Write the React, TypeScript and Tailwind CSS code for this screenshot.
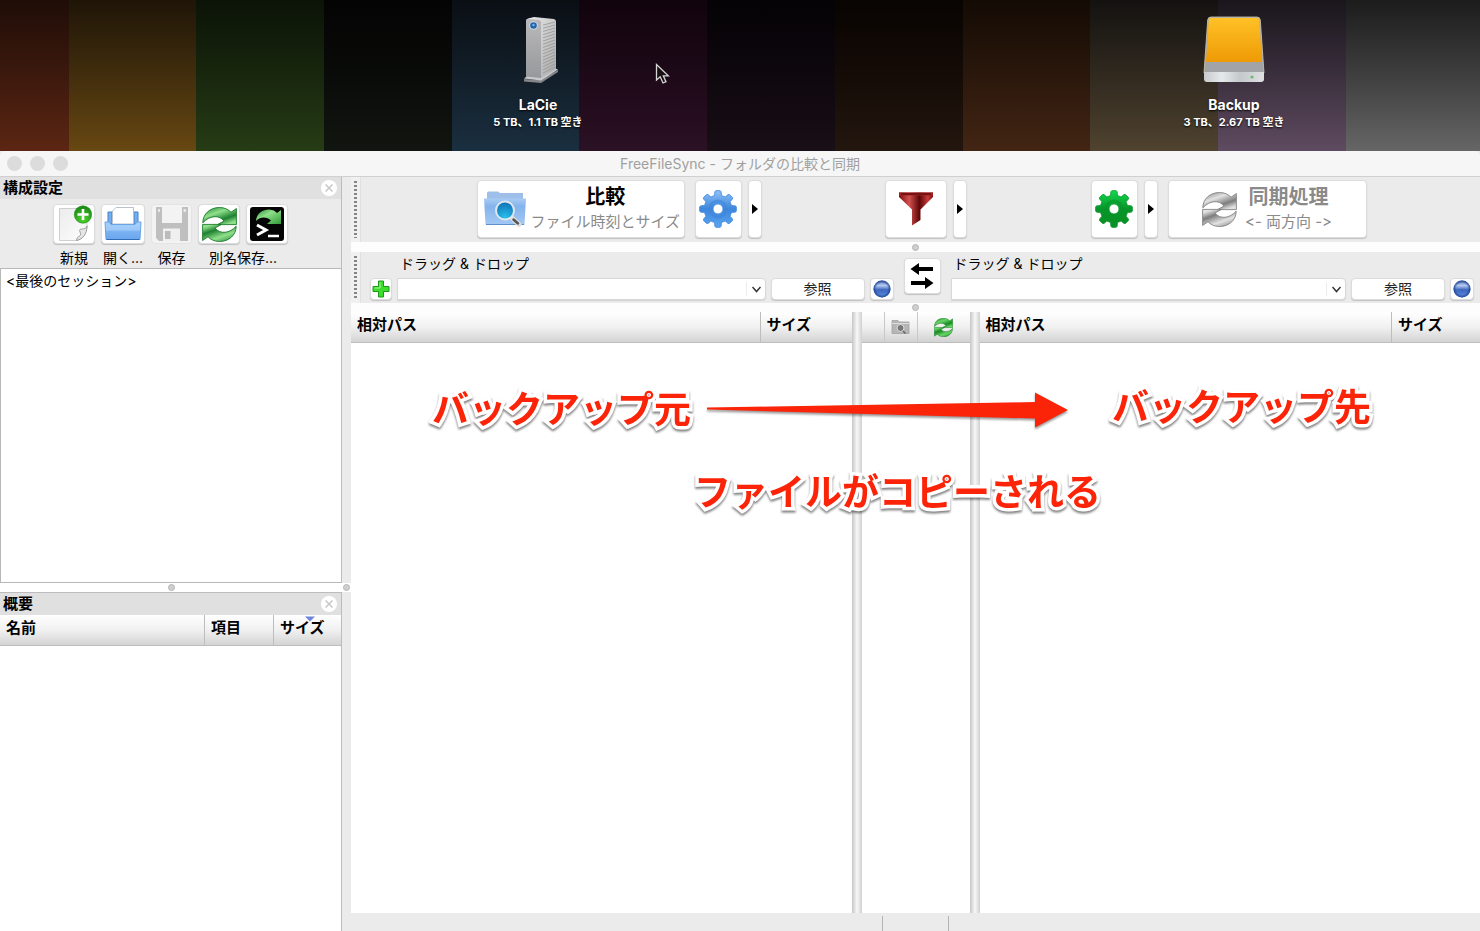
import React from "react";

const stripes = [
  { grow: 69, fill: "bg-linear-to-b from-[#1f0d07] to-[#5c2613]" },
  { grow: 127, fill: "bg-linear-to-b from-[#1f1507] to-[#684812]" },
  { grow: 128, fill: "bg-linear-to-b from-[#0b1307] to-[#263c15]" },
  { grow: 128, fill: "bg-linear-to-b from-[#040404] to-[#11150f]" },
  { grow: 127, fill: "bg-linear-to-b from-[#0a0f14] to-[#1a2f40]" },
  { grow: 128, fill: "bg-linear-to-b from-[#11040d] to-[#2b1124]" },
  { grow: 128, fill: "bg-linear-to-b from-[#050306] to-[#190f16]" },
  { grow: 128, fill: "bg-linear-to-b from-[#080402] to-[#23160f]" },
  { grow: 127, fill: "bg-linear-to-b from-[#140b05] to-[#432514]" },
  { grow: 128, fill: "bg-linear-to-b from-[#141210] to-[#50432f]" },
  { grow: 128, fill: "bg-linear-to-b from-[#1a161c] to-[#5f4b61]" },
  { grow: 134, fill: "bg-linear-to-b from-[#1c1c1c] to-[#666666]" },
];

const raised = "rounded-[4px] border border-[#dcdcdc] bg-white shadow-[0_1px_1px_rgba(0,0,0,0.18)]";
const headerFill = "bg-linear-to-b from-white via-[#f0f0f0] to-[#d2d2d2]";
const headerCell = "border-b border-[#bdbdbd] pb-1 pl-[6px] leading-[20px] font-bold";

function gearPath(cx: number, cy: number, outer: number, inner: number, hole: number) {
  const pts: string[] = [];
  for (let i = 0; i < 8; i++) {
    const a = (i * Math.PI) / 4 - Math.PI / 2;
    const at = (r: number, d: number) =>
      `${(cx + r * Math.cos(a + d)).toFixed(2)},${(cy + r * Math.sin(a + d)).toFixed(2)}`;
    pts.push(at(inner, -0.25), at(outer - 1, -0.18), at(outer, -0.12), at(outer, 0.12), at(outer - 1, 0.18), at(inner, 0.25));
  }
  return `M${pts.join("L")}Z M${cx - hole},${cy} a${hole},${hole} 0 1,0 ${hole * 2},0 a${hole},${hole} 0 1,0 ${-hole * 2},0Z`;
}

function Gear({ id, top, mid, low }: { id: string; top: string; mid: string; low: string }) {
  return (
    <svg width="38" height="38" viewBox="0 0 38 38" aria-hidden="true">
      <defs>
        <linearGradient id={id} x1="0" y1="0" x2="0" y2="1">
          <stop offset="0" stopColor={top} />
          <stop offset="0.5" stopColor={mid} />
          <stop offset="1" stopColor={low} />
        </linearGradient>
      </defs>
      <path d={gearPath(19, 19, 18.5, 14, 5)} fillRule="evenodd" fill={`url(#${id})`} stroke={mid} strokeWidth="0.8" />
      <circle cx="19" cy="19" r="8" fill="none" stroke={mid} strokeOpacity="0.6" strokeWidth="3" />
    </svg>
  );
}

function SyncArrows({ id, size, light, dark, edge }: { id: string; size: number; light: string; dark: string; edge: string }) {
  const d = "M0.8 15.8C0.800 7 8 0.500 17.500 0.500C22.500 0.500 26.500 2.500 29 5.200L34.400 1.500V17.600H15.500L22 14C17 7.500 7.500 8.500 0.800 15.800Z";
  return (
    <svg width={size} height={size} viewBox="0 0 35 35" aria-hidden="true">
      <defs>
        <linearGradient id={id} x1="0" y1="0" x2="0.7" y2="1">
          <stop offset="0" stopColor={dark} />
          <stop offset="0.4" stopColor={light} />
          <stop offset="0.75" stopColor={dark} />
          <stop offset="1" stopColor={light} />
        </linearGradient>
      </defs>
      <path d={d} fill={`url(#${id})`} stroke={edge} strokeWidth="0.9" />
      <path d={d} transform="rotate(180 17.5 17.5)" fill={`url(#${id})`} stroke={edge} strokeWidth="0.9" />
    </svg>
  );
}

function NewIcon() {
  return (
    <svg width="36" height="38" viewBox="0 0 36 38" aria-hidden="true">
      <defs>
        <linearGradient id="page" x1="0" y1="0" x2="1" y2="1">
          <stop offset="0" stopColor="#ececec" />
          <stop offset="1" stopColor="#fdfdfd" />
        </linearGradient>
        <radialGradient id="plusBall" cx="0.5" cy="0.8" r="0.8">
          <stop offset="0" stopColor="#4fd52c" />
          <stop offset="1" stopColor="#168414" />
        </radialGradient>
      </defs>
      <path d="M3.500 3.500H31V22C30 29 27 34 21 35.500H3.500Z" fill="url(#page)" stroke="#cfcfcf" />
      <path d="M31 21C30 24.500 26 23.500 24 24.500C22.500 26 25.500 28 24.500 30C23.500 32 21 31 20.500 35.500C27 34 31 29 31 21Z" fill="#e6e6e6" stroke="#8d8d8d" strokeWidth="0.8" />
      <circle cx="27" cy="9.500" r="8.700" fill="url(#plusBall)" stroke="#1c8a18" strokeWidth="0.6" />
      <path d="M27 4V15M21.500 9.500H32.500" stroke="#fff" strokeWidth="2.600" />
    </svg>
  );
}

function OpenIcon() {
  return (
    <svg width="38" height="36" viewBox="0 0 38 36" aria-hidden="true">
      <defs>
        <linearGradient id="tray" x1="0" y1="0" x2="0" y2="1">
          <stop offset="0" stopColor="#a9d0fb" />
          <stop offset="0.45" stopColor="#9cc8f8" />
          <stop offset="0.55" stopColor="#7ab2f2" />
          <stop offset="1" stopColor="#6aa6ec" />
        </linearGradient>
      </defs>
      <path d="M4 6H8V18H4ZM30 6H34V18H30Z" fill="#75aeee" stroke="#4183cc" />
      <path d="M8.500 18V5L12 1.500H29.500V18Z" fill="#fff" stroke="#b9c2cc" />
      <path d="M1 16H5L7 18.500H31L33 16H37L36 33.500H2Z" fill="url(#tray)" stroke="#6aa5e6" />
      <path d="M2.500 33.500H35.500" stroke="#2f6cb8" />
    </svg>
  );
}

function SaveIcon() {
  return (
    <svg width="34" height="36" viewBox="0 0 34 36" aria-hidden="true">
      <path d="M1 1H33V35H4L1 32Z" fill="#bfbfbf" />
      <path d="M7 0.500H27V17H7Z" fill="#f3f3f3" />
      <path d="M28.500 3H31V6H28.500ZM3 3H5V6H3Z" fill="#e8e8e8" />
      <path d="M8 22.500H25V35H8Z" fill="#f0f0f0" />
      <path d="M10 25H15.500V33H10Z" fill="#bcbcbc" />
    </svg>
  );
}

function BatchIcon() {
  return (
    <svg width="36" height="36" viewBox="0 0 36 36" aria-hidden="true">
      <defs>
        <linearGradient id="batchArrow" x1="0" y1="0" x2="1" y2="1">
          <stop offset="0" stopColor="#2c8a3a" />
          <stop offset="0.4" stopColor="#8fe08b" />
          <stop offset="1" stopColor="#2f9a36" />
        </linearGradient>
      </defs>
      <rect x="1" y="1" width="34" height="34" rx="3" fill="#050505" />
      <path d="M7 15C7.500 7 14 3.500 20 3.500C24 3.800 26 5 28 7L32 4V18H18L22 14.500C18 10.500 11 10.500 7 15Z" fill="url(#batchArrow)" />
      <path d="M8 19L17 24L8 29" fill="none" stroke="#fff" strokeWidth="3" />
      <path d="M19 30H30" stroke="#fff" strokeWidth="2.500" />
    </svg>
  );
}

function CompareIcon() {
  return (
    <svg width="44" height="38" viewBox="0 0 44 38" aria-hidden="true">
      <defs>
        <linearGradient id="folder" x1="0" y1="0" x2="0" y2="1">
          <stop offset="0" stopColor="#a9cbf3" />
          <stop offset="0.3" stopColor="#84b4ec" />
          <stop offset="1" stopColor="#a3c8f4" />
        </linearGradient>
        <radialGradient id="lens" cx="0.5" cy="0.9" r="0.9">
          <stop offset="0" stopColor="#25c3ee" />
          <stop offset="1" stopColor="#126cb4" />
        </radialGradient>
      </defs>
      <path d="M4 10V3Q4 1.500 5.500 1.500H15L17 3H40V10Z" fill="#9dbfe9" />
      <path d="M1 8.500H43L41.500 34Q41.500 35 40 35H4Q2.500 35 2.500 34Z" fill="url(#folder)" />
      <path d="M3 34.500H41" stroke="#5f8fca" />
      <path d="M28 27L36 34.500" stroke="#dedede" strokeWidth="5" strokeLinecap="round" />
      <path d="M30.500 29.500L35 33.500" stroke="#555" strokeWidth="2.500" strokeLinecap="round" />
      <circle cx="22" cy="20.500" r="9" fill="url(#lens)" stroke="#dfe7ee" strokeWidth="2" />
    </svg>
  );
}

function FunnelIcon() {
  return (
    <svg width="36" height="36" viewBox="0 0 36 36" aria-hidden="true">
      <defs>
        <linearGradient id="funnel" x1="0" y1="0" x2="1" y2="0">
          <stop offset="0" stopColor="#7d0c0c" />
          <stop offset="0.3" stopColor="#d35050" />
          <stop offset="0.6" stopColor="#5e0606" />
          <stop offset="0.85" stopColor="#c93a3a" />
          <stop offset="1" stopColor="#7d0c0c" />
        </linearGradient>
      </defs>
      <path d="M1 1.500H35V6L22.500 18.500V29L14 34.500V18.500L1 6Z" fill="url(#funnel)" />
      <path d="M1 1.500H35V4.500H1Z" fill="#a32222" />
      <path d="M3 3H33" stroke="#4a0303" strokeWidth="1" />
    </svg>
  );
}

function BallIcon() {
  return (
    <svg width="18" height="18" viewBox="0 0 18 18" aria-hidden="true">
      <defs>
        <linearGradient id="ball" x1="0" y1="0" x2="0" y2="1">
          <stop offset="0" stopColor="#5a78b4" />
          <stop offset="0.3" stopColor="#b4caf0" />
          <stop offset="0.55" stopColor="#3c66bd" />
          <stop offset="1" stopColor="#5f8ee0" />
        </linearGradient>
        <radialGradient id="ballRim">
          <stop offset="0.65" stopColor="#1b3f92" stopOpacity="0" />
          <stop offset="1" stopColor="#1b3f92" stopOpacity="0.9" />
        </radialGradient>
      </defs>
      <circle cx="9" cy="9" r="8.500" fill="url(#ball)" />
      <circle cx="9" cy="9" r="8.500" fill="url(#ballRim)" />
    </svg>
  );
}

function PlusIcon() {
  return (
    <svg width="18" height="18" viewBox="0 0 18 18" aria-hidden="true">
      <path d="M6.500 1H11.500V6.500H17V11.500H11.500V17H6.500V11.500H1V6.500H6.500Z" fill="#3ddc2f" stroke="#189a17" />
      <path d="M8 2.500V8H2.500" fill="none" stroke="#a6f59a" />
    </svg>
  );
}

function SwapIcon() {
  return (
    <svg width="24" height="26" viewBox="0 0 24 26" aria-hidden="true">
      <path d="M0.500 6L9 0V4H23V8H9V12ZM23.500 20L15 14V18H1V22H15V26Z" fill="#000" />
    </svg>
  );
}

function CameraIcon() {
  return (
    <svg width="19" height="16" viewBox="0 0 19 16" aria-hidden="true">
      <path d="M1 3V1.500H7L8 3H18V14.500H1Z" fill="#b5b5b5" stroke="#a2a2a2" strokeWidth="0.800" />
      <path d="M1 4.500H18" stroke="#ddd" />
      <circle cx="9.500" cy="9" r="3.500" fill="#777" stroke="#ddd" />
      <path d="M12 12L14.500 14.500" stroke="#666" strokeWidth="1.500" />
    </svg>
  );
}

function LacieDrive() {
  return (
    <svg width="40" height="70" viewBox="-4 0 40 70" overflow="visible" aria-hidden="true">
      <defs>
        <linearGradient id="lacieFront" x1="0" y1="0" x2="0" y2="1">
          <stop offset="0" stopColor="#b9b9bb" />
          <stop offset="1" stopColor="#97989b" />
        </linearGradient>
        <linearGradient id="lacieSide" x1="0" y1="0" x2="1" y2="1">
          <stop offset="0" stopColor="#ececec" />
          <stop offset="1" stopColor="#a8a8a8" />
        </linearGradient>
      </defs>
      <path d="M2 63L18 64L36 54V56L19 67L2 65.500Z" fill="#85868a" />
      <path d="M2 62.500L5 60L32 52L36 53.500L19 64.500Z" fill="#c8c9cb" />
      <path d="M4 5Q4 3 6 2.500L12 1L32 3Q34 3.500 34 5.500V53L19 62V6Z" fill="url(#lacieSide)" />
      <path d="M4 5Q4 3 6 3L17 4Q19 4.500 19 6.500V62L4 60.500Z" fill="url(#lacieFront)" />
      {Array.from({ length: 16 }, (_, i) => (
        <path key={i} d={`M21 ${9 + i * 3.2}L33 ${6 + i * 3}`} stroke="#949494" strokeWidth="0.8" />
      ))}
      <circle cx="11.500" cy="9.500" r="4.300" fill="#d3dbe4" />
      <circle cx="11.500" cy="9.500" r="3.300" fill="#2464a8" />
      <circle cx="11.500" cy="9" r="1.200" fill="#79b3e8" />
    </svg>
  );
}

function BackupDrive() {
  return (
    <svg width="62" height="70" viewBox="0 0 62 70" aria-hidden="true">
      <defs>
        <linearGradient id="gold" x1="0" y1="0" x2="0" y2="1">
          <stop offset="0" stopColor="#ffc126" />
          <stop offset="1" stopColor="#ee9a05" />
        </linearGradient>
        <linearGradient id="driveFace" x1="0" y1="0" x2="1" y2="0">
          <stop offset="0" stopColor="#c8cacd" />
          <stop offset="0.3" stopColor="#e6e9ea" />
          <stop offset="0.6" stopColor="#c5c9cc" />
          <stop offset="1" stopColor="#dfe0e2" />
        </linearGradient>
      </defs>
      <path d="M8 1H54Q57 1 57.300 4L61 57H1L4.700 4Q5 1 8 1Z" fill="#a2a3a6" stroke="#d7cbb0" strokeWidth="0.8" />
      <path d="M8 2H54Q56 2 56.300 4L59 46H3L5.700 4Q6 2 8 2Z" fill="url(#gold)" />
      <path d="M1 56H61V63Q61 66 58 66H4Q1 66 1 63Z" fill="url(#driveFace)" />
      <circle cx="49" cy="61" r="1.600" fill="#69bd6b" />
    </svg>
  );
}

function DesktopDrive({ name, info, children, place }: { name: string; info: string; children: React.ReactNode; place: string }) {
  return (
    <figure className={`absolute top-4 flex w-32 flex-col items-center text-white ${place}`}>
      {children}
      <figcaption className="mt-2 text-center font-bold whitespace-nowrap [text-shadow:0_1px_2px_#000]">
        <span className="block text-[14px] leading-[22px]">{name}</span>
        <span className="block text-[11px] leading-[13px]">{info}</span>
      </figcaption>
    </figure>
  );
}

function Dot() {
  return <span className="block size-[7px] rounded-full border border-[#b4b4b4] bg-[#cfcfcf]" />;
}

function Grip() {
  return (
    <div className="w-[10px] shrink-0 border-r border-[#e0e0e0] bg-[#f0f0f0] px-[3px] py-1">
      <div className="h-full w-[3px] bg-[repeating-linear-gradient(to_bottom,#858585_0px,#858585_2px,transparent_2px,transparent_4px)]" />
    </div>
  );
}

function PanelTitle({ children }: { children: string }) {
  return (
    <div className="flex h-[22px] items-center justify-between bg-[#e0e0e0] pr-1 pl-[3px]">
      <h2 className="text-[15px] leading-[22px] font-bold">{children}</h2>
      <button aria-label={`${children}を閉じる`} className="flex size-4 items-center justify-center rounded-full bg-white">
        <svg width="8" height="8" viewBox="0 0 8 8" aria-hidden="true">
          <path d="M0.500 0.500L7.500 7.500M7.500 0.500L0.500 7.500" stroke="#c8c8c8" strokeWidth="1.500" />
        </svg>
      </button>
    </div>
  );
}

function ConfigButton({ label, width, disabled, children }: { label: string; width: string; disabled?: boolean; children: React.ReactNode }) {
  return (
    <button
      aria-label={label}
      disabled={disabled}
      className={`flex h-10 items-center justify-center ${width} ${disabled ? "rounded-[4px] border border-[#e4e4e4] bg-[#f3f3f3]" : raised}`}
    >
      {children}
    </button>
  );
}

function MenuArrow({ label }: { label: string }) {
  return (
    <button aria-label={label} className={`flex h-[58px] w-[14px] items-center justify-center ${raised}`}>
      <svg width="6" height="10" viewBox="0 0 6 10" aria-hidden="true">
        <path d="M0 0L6 5L0 10Z" fill="#000" />
      </svg>
    </button>
  );
}

function FolderPicker({ side, withAdd }: { side: string; withAdd?: boolean }) {
  const id = `folder-${side}`;
  return (
    <div className="min-w-0 flex-1">
      <label htmlFor={id} className={`block text-[14px] leading-[20px] ${withAdd ? "pl-[30px]" : "pl-[3px]"}`}>
        ドラッグ &amp; ドロップ
      </label>
      <div className="mt-1 flex h-[22px] items-center gap-[5px]">
        {withAdd && (
          <button aria-label="フォルダを追加" className={`flex size-[22px] shrink-0 items-center justify-center ${raised}`}>
            <PlusIcon />
          </button>
        )}
        <div className="relative h-[22px] min-w-0 flex-1">
          <select id={id} className="h-full w-full appearance-none rounded-r-[4px] border border-[#d8d8d8] bg-white shadow-[0_1px_1px_rgba(0,0,0,0.1)]">
            <option value=""></option>
          </select>
          <svg className="pointer-events-none absolute top-2 right-[5px]" width="9" height="7" viewBox="0 0 9 7" aria-hidden="true">
            <path d="M0.500 1L4.500 5.500L8.500 1" fill="none" stroke="#333" strokeWidth="1.500" />
          </svg>
          <span className="pointer-events-none absolute top-1 right-[19px] h-[14px] w-px bg-[#ececec]" />
        </div>
        <button className={`h-[22px] w-[94px] shrink-0 text-[14px] leading-[20px] text-[#222] ${raised}`}>参照</button>
        <button aria-label="クラウド" className={`flex h-[22px] w-6 shrink-0 items-center justify-center ${raised}`}>
          <BallIcon />
        </button>
      </div>
    </div>
  );
}

function FileGrid({ name, sizeWidth }: { name: string; sizeWidth: string }) {
  return (
    <section aria-label={name} className="min-w-0 flex-1 bg-white">
      <table className="w-full table-fixed border-separate border-spacing-0 text-left text-[15px]">
        <thead>
          <tr className={`h-[31px] ${headerFill}`}>
            <th className={headerCell}>相対パス</th>
            <th className={`border-l ${headerCell} ${sizeWidth}`}>サイズ</th>
          </tr>
        </thead>
      </table>
    </section>
  );
}

function GridSash() {
  return <div className="w-[10px] shrink-0 bg-linear-to-r from-[#c6c6c6] via-[#f8f8f8] to-[#d0d0d0]" />;
}

const callout =
  "absolute text-[37px] leading-[48px] font-bold whitespace-nowrap text-[#fb2408] [-webkit-text-stroke:7px_white] [paint-order:stroke_fill] [stroke-linejoin:round] drop-shadow-[0_2px_1px_rgba(0,0,0,0.5)]";

export default function App() {
  return (
    <div className="relative flex min-h-screen flex-col overflow-hidden bg-[#ebebeb] font-['Inter','Noto_Sans_CJK_JP',sans-serif] text-black [font-variant-ligatures:none]">
      <header className="relative flex h-[151px] shrink-0 bg-black">
        {stripes.map((s, i) => (
          <div key={i} className={s.fill} style={{ flex: `${s.grow} 1 0` }} />
        ))}
        <DesktopDrive name="LaCie" info="5 TB、1.1 TB 空き" place="left-[474px]">
          <LacieDrive />
        </DesktopDrive>
        <DesktopDrive name="Backup" info="3 TB、2.67 TB 空き" place="left-[1170px]">
          <BackupDrive />
        </DesktopDrive>
        <svg className="absolute top-[63px] left-[655px]" width="16" height="22" viewBox="0 0 16 22" aria-hidden="true">
          <path d="M1.500 1.500V17L5.200 13.800L8 20L11 18.700L8.300 12.800H13.300Z" fill="#1a1014" stroke="#d6d6d6" strokeWidth="1.300" />
        </svg>
      </header>

      <div className="relative flex h-[26px] shrink-0 items-center justify-center rounded-t-[5px] border-b border-[#d0d0d0] bg-[#f6f6f6]">
        <div className="absolute left-[7px] flex gap-2">
          <span className="size-[15px] rounded-full bg-[#dcdcdc]" />
          <span className="size-[15px] rounded-full bg-[#dcdcdc]" />
          <span className="size-[15px] rounded-full bg-[#dcdcdc]" />
        </div>
        <h1 className="text-[14px] leading-[24px] text-[#a0a0a0]">FreeFileSync - フォルダの比較と同期</h1>
      </div>

      <div className="flex flex-1">
        <aside className="flex w-[351px] shrink-0 flex-col">
          <div className="mr-[9px] flex flex-[407_1_0] flex-col border-r border-[#bcbcbc]">
            <PanelTitle>構成設定</PanelTitle>
            <div className="flex h-[69px] justify-center gap-[6px] pt-[5px] text-[14px] leading-[20px]">
              <div className="flex w-[42px] flex-col items-center gap-1">
                <ConfigButton label="新規" width="w-[42px]"><NewIcon /></ConfigButton>
                <span>新規</span>
              </div>
              <div className="flex w-11 flex-col items-center gap-1">
                <ConfigButton label="開く" width="w-11"><OpenIcon /></ConfigButton>
                <span>開く...</span>
              </div>
              <div className="flex w-[41px] flex-col items-center gap-1">
                <ConfigButton label="保存" width="w-[41px]" disabled><SaveIcon /></ConfigButton>
                <span>保存</span>
              </div>
              <div className="flex flex-col items-center gap-1">
                <div className="flex gap-[6px]">
                  <ConfigButton label="別名で保存" width="w-[42px]">
                    <SyncArrows id="sync-save" size={35} light="#8fe08b" dark="#1d8031" edge="#1d7a2c" />
                  </ConfigButton>
                  <ConfigButton label="一括ジョブとして保存" width="w-[42px]"><BatchIcon /></ConfigButton>
                </div>
                <span>別名保存...</span>
              </div>
            </div>
            <ul className="flex-1 border border-r-0 border-[#b8b8b8] bg-white px-[5px] py-[2px] text-[14px] leading-[20px]">
              <li>&lt;最後のセッション&gt;</li>
            </ul>
          </div>
          <div className="flex h-[9px] items-center bg-white">
            <div className="flex flex-1 justify-center"><Dot /></div>
            <div className="flex w-[9px] justify-center"><Dot /></div>
          </div>
          <div className="mr-[9px] flex flex-[338_1_0] flex-col border-t border-r border-[#bcbcbc] bg-white">
            <PanelTitle>概要</PanelTitle>
            <table className="w-full table-fixed border-separate border-spacing-0 text-left text-[15px]">
              <thead>
                <tr className={`h-[31px] ${headerFill}`}>
                  <th className={headerCell}>名前</th>
                  <th className={`w-[69px] border-l ${headerCell}`}>項目</th>
                  <th className={`relative w-[68px] border-l ${headerCell}`}>
                    サイズ
                    <svg className="absolute top-px left-[31px]" width="10" height="6" viewBox="0 0 10 6" aria-hidden="true">
                      <path d="M0 0.500H10L5 5.500Z" fill="#6f86dc" />
                    </svg>
                  </th>
                </tr>
              </thead>
            </table>
          </div>
        </aside>

        <main className="flex min-w-0 flex-1 flex-col">
          <div className="flex h-[65px] shrink-0">
            <Grip />
            <div className="flex flex-1 items-start pt-[3px] pl-[2px]">
              <div className="grow" />
              <button className={`flex h-[58px] w-[208px] items-center gap-1 pl-[5px] ${raised}`}>
                <CompareIcon />
                <span className="text-center whitespace-nowrap">
                  <span className="block text-[20px] leading-[26px] font-bold">比較</span>
                  <span className="block text-[15px] leading-[24px] text-[#8a8a8a]">ファイル時刻とサイズ</span>
                </span>
              </button>
              <button aria-label="比較設定" className={`mr-[6px] ml-[10px] flex h-[58px] w-[47px] items-center justify-center ${raised}`}>
                <Gear id="gear-blue" top="#8fc1f7" mid="#3d86dc" low="#5aa5f2" />
              </button>
              <MenuArrow label="比較メニュー" />
              <div className="grow basis-[10px]" />
              <button aria-label="フィルター" className={`mr-[6px] flex h-[58px] w-[62px] items-center justify-center ${raised}`}>
                <FunnelIcon />
              </button>
              <MenuArrow label="フィルターメニュー" />
              <div className="grow basis-[10px]" />
              <button aria-label="同期設定" className={`mr-[6px] flex h-[58px] w-[47px] items-center justify-center ${raised}`}>
                <Gear id="gear-green" top="#12d94c" mid="#07952a" low="#0a8f22" />
              </button>
              <MenuArrow label="同期メニュー" />
              <button disabled className={`ml-[10px] flex h-[58px] w-[199px] items-center justify-center gap-2 ${raised}`}>
                <SyncArrows id="sync-run" size={35} light="#e2e2e2" dark="#7d7d7d" edge="#858585" />
                <span className="text-center whitespace-nowrap text-[#8a8a8a]">
                  <span className="block text-[20px] leading-[26px] font-bold">同期処理</span>
                  <span className="block text-[15px] leading-[24px]">&lt;- 両方向 -&gt;</span>
                </span>
              </button>
              <div className="grow" />
            </div>
          </div>

          <div className="flex h-[10px] shrink-0 items-center justify-center bg-[#fdfdfd]"><Dot /></div>

          <div className="flex h-[51px] shrink-0">
            <Grip />
            <div className="flex min-w-0 flex-1 items-start pt-[2px] pr-[6px] pl-[9px]">
              <FolderPicker side="left" withAdd />
              <button aria-label="左右を入れ替え" className={`mx-[10px] mt-1 flex h-9 w-[37px] shrink-0 items-center justify-center ${raised}`}>
                <SwapIcon />
              </button>
              <FolderPicker side="right" />
            </div>
          </div>

          <div className="flex h-[9px] shrink-0 items-center justify-center bg-[#fdfdfd]"><Dot /></div>

          <div className="flex flex-1">
            <FileGrid name="左フォルダ" sizeWidth="w-[92px]" />
            <GridSash />
            <section aria-label="アクション" className="w-[108px] shrink-0 bg-white">
              <div className={`flex h-[31px] border-b border-[#bdbdbd] ${headerFill}`}>
                <div className="w-[22px]" />
                <div className="flex w-[34px] items-center justify-center border-x border-[#c8c8c8]"><CameraIcon /></div>
                <div className="flex flex-1 items-center justify-center">
                  <SyncArrows id="sync-grid" size={19} light="#67d467" dark="#178a22" edge="#137a1d" />
                </div>
              </div>
            </section>
            <GridSash />
            <FileGrid name="右フォルダ" sizeWidth="w-[89px]" />
          </div>

          <footer className="flex h-[18px] shrink-0 justify-center bg-[#ebebeb] pt-[3px]">
            <div className="w-[67px] border-x border-[#b4b4b4]" />
          </footer>
        </main>
      </div>

      <p className={`${callout} top-[386px] left-[432px]`}>バックアップ元</p>
      <svg className="absolute top-[390px] left-[704px] drop-shadow-[0_2px_1px_rgba(0,0,0,0.4)]" width="368" height="42" viewBox="0 0 368 42" aria-hidden="true">
        <path d="M3 17.500L331 12V2.500L364 20L331 37.500V28.500L3 19.500Z" fill="#fb2408" />
      </svg>
      <p className={`${callout} top-[384px] left-[1112px]`}>バックアップ先</p>
      <p className={`${callout} top-[469px] left-[694px]`}>ファイルがコピーされる</p>
    </div>
  );
}
